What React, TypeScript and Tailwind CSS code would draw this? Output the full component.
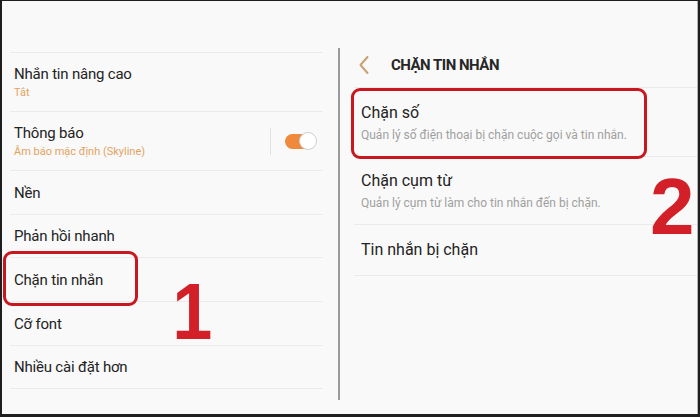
const font = { fontFamily: "Roboto, 'Noto Sans', sans-serif" }

interface LeftItem {
  title: string
  sub?: string
  h: string
  toggle?: boolean
  boxed?: boolean
}

const leftItems: LeftItem[] = [
  { title: "Nhắn tin nâng cao", sub: "Tắt", h: "h-[58px]" },
  { title: "Thông báo", sub: "Âm báo mặc định (Skyline)", h: "h-[58px]", toggle: true },
  { title: "Nền", h: "h-[43px]" },
  { title: "Phản hồi nhanh", h: "h-[42px]" },
  { title: "Chặn tin nhắn", h: "h-[43px]", boxed: true },
  { title: "Cỡ font", h: "h-[43px]" },
  { title: "Nhiều cài đặt hơn", h: "h-[42px]" },
]

const rightItems = [
  { title: "Chặn số", sub: "Quản lý số điện thoại bị chặn cuộc gọi và tin nhắn.", h: "h-[68px]", boxed: true },
  { title: "Chặn cụm từ", sub: "Quản lý cụm từ làm cho tin nhắn đến bị chặn.", h: "h-[67px]" },
  { title: "Tin nhắn bị chặn", h: "h-[50px]" },
]

function Toggle() {
  return (
    <div className="flex items-center h-full">
      <div className="w-px h-[27px] bg-[#e2e2e2] mr-[14px]" />
      <div className="relative w-[32px] h-[18px] mr-[21px]">
        <div className="absolute left-0 top-[2px] w-[28px] h-[15px] rounded-full bg-[#ef8a3c]" />
        <div className="absolute right-0 top-0 w-[18px] h-[18px] rounded-full bg-white border border-[#cfcfcf]" />
      </div>
    </div>
  )
}

export default function App() {
  return (
    <div
      className="w-[700px] h-[417px] bg-[#f9f9f9] border-t border-l-2 border-r-2 border-b-[3px] border-[#1e1e1e] flex relative overflow-hidden"
      style={font}
    >
      {/* Left settings list */}
      <div className="w-[336px] pt-[51px] flex flex-col">
        <div className="h-px bg-[#ebebeb] ml-[8px] mr-[15px]" />
        {leftItems.map((item) => (
          <div key={item.title} className="flex flex-col">
            <div className={`${item.h} relative flex items-center pl-[12px]`}>
              <div className="flex-1 flex flex-col">
                <span className="text-[15px] leading-[20px] tracking-[-0.2px] text-[#232323]">{item.title}</span>
                {item.sub && (
                  <span className="text-[11px] leading-[16px] text-[#e3a35f] mt-[1px]">{item.sub}</span>
                )}
              </div>
              {item.toggle && <Toggle />}
              {item.boxed && (
                <div className="absolute left-[1px] top-[-7px] w-[135px] h-[55px] rounded-[9px] border-[3px] border-[#c8171f]" />
              )}
            </div>
            <div className="h-px bg-[#ebebeb] ml-[8px] mr-[15px]" />
          </div>
        ))}
      </div>

      {/* Divider */}
      <div className="w-[2px] bg-[#9a9a9a] mt-[47px] mb-[14px]" />

      {/* Right: Chặn tin nhắn */}
      <div className="flex-1 flex flex-col border-r border-[#b5b5b5]">
        <div className="h-[86px] pt-[54px] flex items-start">
          <svg width="12" height="20" viewBox="0 0 12 20" className="ml-[18px] mr-[21px]">
            <path d="M9.5 2 L2.5 10 L9.5 18" fill="none" stroke="#c9a273" strokeWidth="2" strokeLinecap="round" strokeLinejoin="round" />
          </svg>
          <span className="text-[15px] leading-[20px] font-bold text-[#262626] tracking-[-0.5px]">CHẶN TIN NHẮN</span>
        </div>
        <div className="h-px bg-[#ebebeb] ml-[14px]" />
        {rightItems.map((item) => (
          <div key={item.title} className="flex flex-col">
            <div className={`${item.h} relative flex flex-col justify-center pl-[21px]`}>
              <span className="text-[16px] leading-[22px] text-[#232323]">{item.title}</span>
              {item.sub && (
                <span className="text-[12px] leading-[16px] text-[#a0a0a0] mt-[3px]">{item.sub}</span>
              )}
              {item.boxed && (
                <div className="absolute left-[11px] top-0 w-[296px] h-[71px] rounded-[9px] border-[3px] border-[#c8171f]" />
              )}
            </div>
            <div className="h-px bg-[#ebebeb] ml-[14px]" />
          </div>
        ))}
      </div>

      {/* Step numbers */}
      <span
        className="absolute left-[168px] top-[266px] text-[80px] leading-[90px] font-bold text-[#d31f27] scale-x-90"
        style={{ fontFamily: "'Liberation Sans', Arial, sans-serif" }}
      >
        1
      </span>
      <span
        className="absolute left-[648px] top-[161px] text-[80px] leading-[90px] font-bold text-[#d31f27]"
        style={{ fontFamily: "'Liberation Sans', Arial, sans-serif" }}
      >
        2
      </span>
    </div>
  )
}
